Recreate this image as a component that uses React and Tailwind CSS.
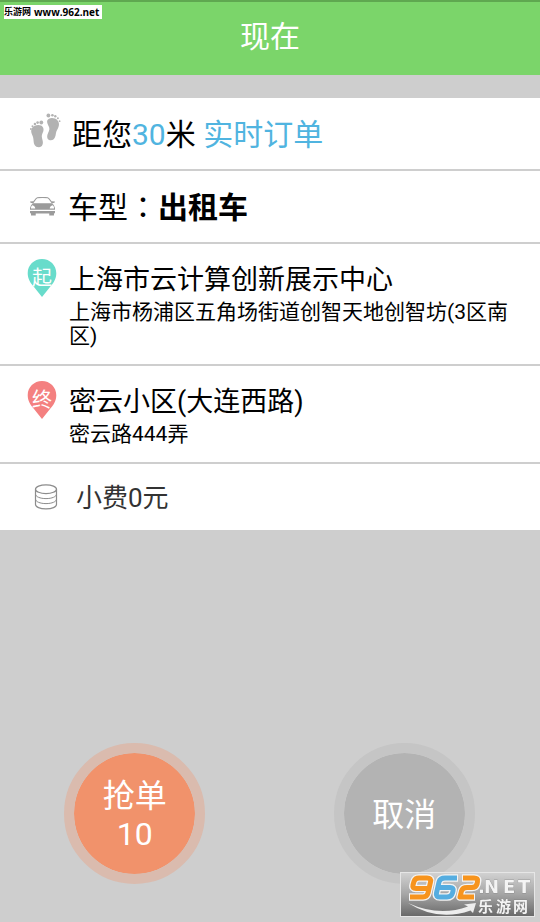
import React from "react";

function Footprints() {
  return (
    <svg className="h-9 w-8 shrink-0" viewBox="0 0 32 36" fill="#b2b2b2" aria-hidden="true">
      <path d="M1.800 16.500C3 13.600 8 12 11 13.500C13.900 14.900 14.200 18.300 12.600 21C11.100 23.700 12 25.500 12.600 28.500C13.500 32 12.300 35 9 35.200C5 35.300 3.700 32 3.600 29C3.500 26.200 3 24.600 2 22.400C1 20.200 .9 18.500 1.800 16.500Z" />
      <circle cx="11.300" cy="10.500" r="1.900" />
      <circle cx="7.600" cy="10.600" r="1.300" />
      <circle cx="4.900" cy="12" r="1.200" />
      <circle cx="2.500" cy="14.200" r="1" />
      <circle cx="0.900" cy="17" r="0.900" />
      <path d="M19 6.700C21.500 5.500 25.500 6 27.600 8.500C30 11.600 28.900 14.900 27.200 17.700C25.900 19.800 26 21.700 25.500 23.700C24.600 27 22.700 28.600 20 28.200C17.300 27.700 16.800 25.200 17.500 22.500C18.300 19.700 20 18 19.200 15.400C18.600 13.600 17.500 12.500 17.200 10.500C16.900 8.800 17.400 7.400 19 6.700Z" />
      <circle cx="18.400" cy="3.500" r="1.900" />
      <circle cx="22.400" cy="3.300" r="1.300" />
      <circle cx="25.300" cy="4.300" r="1.200" />
      <circle cx="27.900" cy="6.300" r="1" />
      <circle cx="29.600" cy="9.200" r="0.900" />
    </svg>
  );
}

function Car() {
  return (
    <svg className="h-5 w-[25px] shrink-0" viewBox="0 0 24 20" preserveAspectRatio="none" fill="#9b9b9b" aria-hidden="true">
      <path d="M2.200 6C4 5.500 5 1.300 7 .8Q12 0 17 .8C19 1.300 20 5.500 21.800 6" fill="none" stroke="#9b9b9b" strokeWidth="1.100" />
      <path d="M0 4.500L3.200 4.200L2.800 6.200L.5 5.800ZM24 4.500L20.800 4.200L21.200 6.200L23.500 5.800Z" />
      <path fillRule="evenodd" d="M3 6.200H21Q24 8 24 11V12.800H0V11Q0 8 3 6.200ZM2 8.300Q.8 9.700 .9 11.600H5Q5.200 9.200 2 8.300ZM22 8.300Q18.800 9.200 19 11.600H23.100Q23.200 9.700 22 8.300Z" />
      <path d="M0 14H24V15.600Q24 16.500 23 16.500V18.600H18.500V16.600H5.500V18.600H1V16.500Q0 16.500 0 15.600Z" />
    </svg>
  );
}

function Coins() {
  return (
    <svg className="h-7 w-6 shrink-0" viewBox="0 0 24 28" fill="none" stroke="#8c8c8c" strokeWidth="1.200" aria-hidden="true">
      <ellipse cx="12" cy="6.200" rx="10.500" ry="4.400" />
      <path d="M1.500 6.200V21.500C1.500 24 6 25.800 12 25.800S22.500 24 22.500 21.500V6.200" />
      <path d="M1.500 11.200C1.500 13.600 6 15.600 12 15.600S22.500 13.600 22.500 11.200M1.500 16.200C1.500 18.600 6 20.600 12 20.600S22.500 18.600 22.500 16.200" strokeWidth="1" />
    </svg>
  );
}

function Pin({ label, color }) {
  return (
    <svg className="h-10 w-[30px] shrink-0" viewBox="0 0 30 40" aria-hidden="true">
      <path d="M15 1C7 1 .7 7.200.7 15.200C.7 21 3.500 25 7 29L15 39L23 29C26.500 25 29.300 21 29.300 15.200C29.300 7.200 23 1 15 1Z" fill={color} />
      <text x="15" y="27" textAnchor="middle" fontSize="20" fill="#fff">{label}</text>
    </svg>
  );
}

function Stop({ pin, color, name, address }) {
  return (
    <li className="flex border-b-2 border-[#cecece] pt-3.5 pr-6 pb-4 pl-[27px]">
      <Pin label={pin} color={color} />
      <div className="mt-1 ml-3 flex-1">
        <h2 className="text-[27px] leading-9">{name}</h2>
        <p className="mt-0.5 text-[21px] leading-6">{address}</p>
      </div>
    </li>
  );
}

function RoundButton({ className, children }) {
  return (
    <button
      type="button"
      className={`size-[141px] rounded-full border-[10px] bg-clip-padding pt-0.5 text-[32px] leading-[38px] text-white ${className}`}
    >
      {children}
    </button>
  );
}

function SiteLogo() {
  return (
    <svg className="fixed right-[5px] bottom-[5px] h-[45px] w-[135px]" viewBox="0 0 135 45" role="img" aria-label="962.NET 乐游网">
      <defs>
        <linearGradient id="plate" x1="0" y1="0" x2="0" y2="1">
          <stop offset="0" stopColor="#d2d2d2" />
          <stop offset="0.500" stopColor="#a5a5a5" />
          <stop offset="1" stopColor="#686868" />
        </linearGradient>
      </defs>
      <rect x="0.500" y="0.500" width="134" height="44" fill="url(#plate)" stroke="#e6e6e6" />
      <g fill="none" strokeLinecap="butt" strokeLinejoin="round">
        <g stroke="#f4f4f4" strokeWidth="7.500">
          <path d="M29 16.500H16Q12 16.500 13 13L14 9.500Q15 6 19 6H27Q31.500 6 30.500 10L28 21Q27 25 23 25H9" />
          <path d="M58 6H45Q40 6 39 10L36.500 21Q35.500 25 40 25H47Q51.500 25 52.500 21L53 19Q54 15.500 50 15.500H38" />
          <path d="M62 6H74Q78.500 6 77.500 9.500L77 12Q76 15.500 72 15.500H67Q62.500 15.500 61.500 19L60 25H75" />
        </g>
        <g strokeWidth="5">
          <path stroke="#f7941d" d="M29 16.500H16Q12 16.500 13 13L14 9.500Q15 6 19 6H27Q31.500 6 30.500 10L28 21Q27 25 23 25H10" />
          <path stroke="#55ade0" d="M57 6H45Q40 6 39 10L36.500 21Q35.500 25 40 25H47Q51.500 25 52.500 21L53 19Q54 15.500 50 15.500H38" />
          <path stroke="#f7941d" d="M63 6H74Q78.500 6 77.500 9.500L77 12Q76 15.500 72 15.500H67Q62.500 15.500 61.500 19L60 25H74" />
        </g>
      </g>
      <path d="M8 31Q39 45 68 34.500L64 32.500L76 31L73 41L70.500 38.500Q38 50 8 31Z" fill="#ededed" />
      <g fill="#f4f4f4" stroke="#777" strokeWidth="0.400" paintOrder="stroke">
        <text x="78 84 103 118" y="21" fontSize="18" fontWeight="700" className="font-['DejaVu_Sans',sans-serif]">.NET</text>
        <text x="78 96 113" y="40" fontSize="15" fontWeight="700" className="font-['Noto_Sans_CJK_SC',sans-serif]">乐游网</text>
      </g>
    </svg>
  );
}

export default function App() {
  return (
    <div className="flex min-h-screen flex-col bg-[#cecece] font-[Roboto,'Noto_Sans_CJK_SC',sans-serif] text-black">
      <header className="flex h-[75px] items-center justify-center border-t-2 border-[#5fa850] bg-[#7bd56a] pb-1">
        <h1 className="text-[30px] leading-9 text-white">现在</h1>
      </header>
      <p className="absolute top-[5px] left-1 flex h-3.5 w-[98px] items-center bg-white text-[9px] leading-3 font-bold whitespace-nowrap">
        <span>乐游网</span>
        <span className="ml-[3px] font-['Open_Sans',sans-serif] text-[10px]">www.962.net</span>
      </p>

      <ul className="mt-[23px] bg-white">
        <li className="flex h-[73px] items-center border-b-2 border-[#cecece] pt-0.5 pl-[30px] text-[30px] leading-9">
          <div className="-mt-2.5 flex"><Footprints /></div>
          <p className="ml-2.5">
            距您<span className="text-[#50b4e0]">30</span>米 <span className="text-[#50b4e0]">实时订单</span>
          </p>
        </li>
        <li className="flex h-[73px] items-center border-b-2 border-[#cecece] pl-[30px] text-[30px] leading-9">
          <Car />
          <p className="ml-[13px]">
            车型<span className="font-['Noto_Sans_CJK_TC',sans-serif]">：</span><strong className="font-bold">出租车</strong>
          </p>
        </li>
        <Stop
          pin="起"
          color="#68dccb"
          name="上海市云计算创新展示中心"
          address="上海市杨浦区五角场街道创智天地创智坊(3区南区)"
        />
        <Stop
          pin="终"
          color="#f48080"
          name="密云小区(大连西路)"
          address="密云路444弄"
        />
        <li className="flex h-[66px] items-center pl-[34px] text-[26px] leading-9 text-[#333]">
          <Coins />
          <p className="mt-0.5 ml-[18px]">小费0元</p>
        </li>
      </ul>

      <div className="mt-auto grid grid-cols-2 justify-items-center pt-10 pr-px pb-[38px]">
        <RoundButton className="border-[#dabbae] bg-[#f1926b]">
          抢单
          <br />
          10
        </RoundButton>
        <RoundButton className="border-[#c5c5c5] bg-[#b3b3b3]">取消</RoundButton>
      </div>
      <SiteLogo />
    </div>
  );
}
